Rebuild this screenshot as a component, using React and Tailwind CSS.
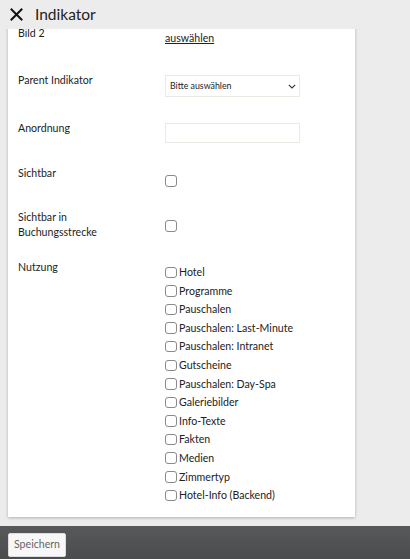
const nutzung = [
  'Hotel',
  'Programme',
  'Pauschalen',
  'Pauschalen: Last-Minute',
  'Pauschalen: Intranet',
  'Gutscheine',
  'Pauschalen: Day-Spa',
  'Galeriebilder',
  'Info-Texte',
  'Fakten',
  'Medien',
  'Zimmertyp',
  'Hotel-Info (Backend)',
];

const Box = () => (
  <span className="inline-block w-[11.5px] h-[11.5px] shrink-0 rounded-[3px] border border-[#8a8a8a] bg-white" />
);

export default function App() {
  return (
    <div
      className="w-full h-[559px] bg-[#ececec] flex flex-col overflow-hidden text-[#222]"
      style={{ fontFamily: 'Lato, "Open Sans", sans-serif' }}
    >
      {/* Header */}
      <header className="h-[29px] shrink-0 flex items-center pl-[10px] gap-[12px] bg-[#ececec] relative z-10">
        <svg width="13" height="13" viewBox="0 0 13 13" className="text-[#111]">
          <path d="M1.5 1.5 L11.5 11.5 M11.5 1.5 L1.5 11.5" stroke="currentColor" strokeWidth="2" strokeLinecap="square" />
        </svg>
        <h1 className="text-[15.5px] leading-none">Indikator</h1>
      </header>

      {/* Scroll area */}
      <main className="flex-1 overflow-hidden px-[8px]">
        <div className="w-[347px] -mt-[12px] pt-[8px] pb-[12px] pl-[10px] bg-white shadow-[0_1px_3px_rgba(0,0,0,0.25)] text-[10.6px]">
          {/* Bild 2 */}
          <div className="flex h-[47px]">
            <div className="w-[147px] leading-[16px]">Bild 2</div>
            <a className="mt-[5px] leading-[16px] underline">auswählen</a>
          </div>

          {/* Parent Indikator */}
          <div className="flex h-[48px]">
            <div className="w-[147px] leading-[16px]">Parent Indikator</div>
            <div className="mt-[3px] w-[135px] h-[22px] border border-[#ebe9e2] flex items-center justify-between pl-[4px] pr-[3px] text-[8.8px]">
              <span>Bitte auswählen</span>
              <svg width="8" height="5" viewBox="0 0 8 5">
                <path d="M0.8 0.8 L4 4 L7.2 0.8" fill="none" stroke="#333" strokeWidth="1.1" />
              </svg>
            </div>
          </div>

          {/* Anordnung */}
          <div className="flex h-[45px]">
            <div className="w-[147px] leading-[16px]">Anordnung</div>
            <div className="mt-[3px] w-[135px] h-[20px] border border-[#ebe9e2]" />
          </div>

          {/* Sichtbar */}
          <div className="flex h-[45px]">
            <div className="w-[147px] leading-[16px]">Sichtbar</div>
            <div className="mt-[10px] flex">
              <Box />
            </div>
          </div>

          {/* Sichtbar in Buchungsstrecke */}
          <div className="flex h-[49px]">
            <div className="w-[147px] leading-[15px]">
              Sichtbar in
              <br />
              Buchungsstrecke
            </div>
            <div className="mt-[10px] flex">
              <Box />
            </div>
          </div>

          {/* Nutzung */}
          <div className="flex">
            <div className="w-[147px] leading-[16px]">Nutzung</div>
            <ul className="mt-[4px] flex flex-col">
              {nutzung.map((n) => (
                <li key={n} className="flex items-center gap-[2.5px] h-[18.6px] leading-none">
                  <Box />
                  <span>{n}</span>
                </li>
              ))}
            </ul>
          </div>
        </div>
      </main>

      {/* Footer */}
      <footer className="h-[33px] shrink-0 bg-gradient-to-b from-[#58595b] to-[#4a4b4d] flex items-end pl-[8px] pb-[2px]">
        <button className="h-[24px] w-[58px] bg-[#f7f7f7] border border-[#dcdcdc] rounded-[2px] text-[10.6px] text-[#666]">
          Speichern
        </button>
      </footer>
    </div>
  );
}
